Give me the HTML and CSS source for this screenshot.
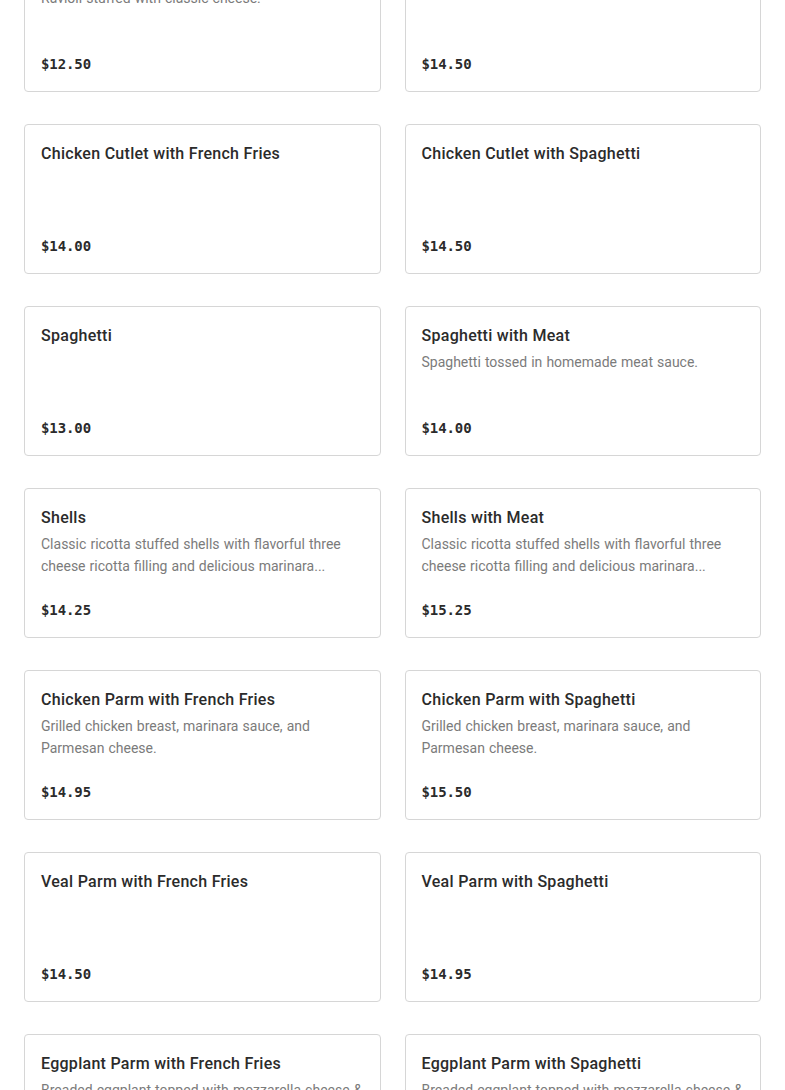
FILE: index.html
```html
<!DOCTYPE html>
<html lang="en">
<head>
<meta charset="utf-8">
<title>Menu</title>
<link rel="stylesheet" href="styles.css">
</head>
<body>
<main class="menu">
  <div class="grid">
    <article class="card">
      <div class="card-body">
        <h3 class="title">Cheese Ravioli</h3>
        <p class="desc">Ravioli stuffed with classic cheese.</p>
      </div>
      <div class="price">$12.50</div>
    </article>
    <article class="card">
      <div class="card-body">
        <h3 class="title">Ravioli with Meatballs</h3>
      </div>
      <div class="price">$14.50</div>
    </article>

    <article class="card">
      <div class="card-body">
        <h3 class="title">Chicken Cutlet with French Fries</h3>
      </div>
      <div class="price">$14.00</div>
    </article>
    <article class="card">
      <div class="card-body">
        <h3 class="title">Chicken Cutlet with Spaghetti</h3>
      </div>
      <div class="price">$14.50</div>
    </article>

    <article class="card">
      <div class="card-body">
        <h3 class="title">Spaghetti</h3>
      </div>
      <div class="price">$13.00</div>
    </article>
    <article class="card">
      <div class="card-body">
        <h3 class="title">Spaghetti with Meat</h3>
        <p class="desc">Spaghetti tossed in homemade meat sauce.</p>
      </div>
      <div class="price">$14.00</div>
    </article>

    <article class="card">
      <div class="card-body">
        <h3 class="title">Shells</h3>
        <p class="desc">Classic ricotta stuffed shells with flavorful three cheese ricotta filling and delicious marinara...</p>
      </div>
      <div class="price">$14.25</div>
    </article>
    <article class="card">
      <div class="card-body">
        <h3 class="title">Shells with Meat</h3>
        <p class="desc">Classic ricotta stuffed shells with flavorful three cheese ricotta filling and delicious marinara...</p>
      </div>
      <div class="price">$15.25</div>
    </article>

    <article class="card">
      <div class="card-body">
        <h3 class="title">Chicken Parm with French Fries</h3>
        <p class="desc">Grilled chicken breast, marinara sauce, and Parmesan cheese.</p>
      </div>
      <div class="price">$14.95</div>
    </article>
    <article class="card">
      <div class="card-body">
        <h3 class="title">Chicken Parm with Spaghetti</h3>
        <p class="desc">Grilled chicken breast, marinara sauce, and Parmesan cheese.</p>
      </div>
      <div class="price">$15.50</div>
    </article>

    <article class="card">
      <div class="card-body">
        <h3 class="title">Veal Parm with French Fries</h3>
      </div>
      <div class="price">$14.50</div>
    </article>
    <article class="card">
      <div class="card-body">
        <h3 class="title">Veal Parm with Spaghetti</h3>
      </div>
      <div class="price">$14.95</div>
    </article>

    <article class="card">
      <div class="card-body">
        <h3 class="title">Eggplant Parm with French Fries</h3>
        <p class="desc">Breaded eggplant topped with mozzarella cheese &amp; marinara sauce.</p>
      </div>
      <div class="price">$14.50</div>
    </article>
    <article class="card">
      <div class="card-body">
        <h3 class="title">Eggplant Parm with Spaghetti</h3>
        <p class="desc">Breaded eggplant topped with mozzarella cheese &amp; marinara sauce.</p>
      </div>
      <div class="price">$14.95</div>
    </article>
  </div>
</main>
</body>
</html>
```
FILE: styles.css
```css
html, body {
  margin: 0;
  padding: 0;
  background: #ffffff;
}

body {
  font-family: Roboto, "Liberation Sans", Arial, sans-serif;
  color: #2b2b2b;
  overflow: hidden;
  height: 1090px;
}

.menu {
  padding: 0 24px;
  margin-top: -58px;
}

.grid {
  display: grid;
  grid-template-columns: 1fr 1fr;
  column-gap: 24px;
  row-gap: 32px;
}

.card {
  box-sizing: border-box;
  height: 150px;
  border: 1px solid #d6d6d6;
  border-radius: 4px;
  padding: 17px 12px 16px 16px;
  display: flex;
  flex-direction: column;
  justify-content: space-between;
  background: #fff;
}

.title {
  margin: 0;
  font-size: 16px;
  line-height: 24px;
  font-weight: 500;
  letter-spacing: 0.28px;
  color: #2b2b2b;
}

.desc {
  margin: 3px 0 0;
  font-size: 14px;
  line-height: 22px;
  word-spacing: 0.6px;
  color: #7b7b7b;
}

.price {
  font-family: "DejaVu Sans Mono", "Liberation Mono", monospace;
  font-size: 14px;
  line-height: 18px;
  font-weight: 700;
  letter-spacing: -0.1px;
  color: #2b2b2b;
  margin-bottom: 2px;
}
```
